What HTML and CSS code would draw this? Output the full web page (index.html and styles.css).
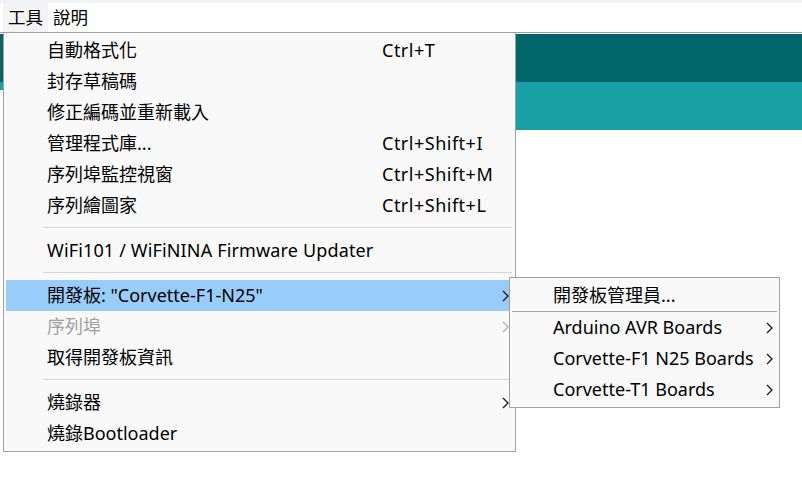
FILE: index.html
```html
<!DOCTYPE html>
<html lang="zh-Hant">
<head>
<meta charset="utf-8">
<title>Arduino IDE - 工具</title>
<link rel="stylesheet" href="styles.css">
</head>
<body>
<div class="app">
  <div class="top-strip"></div>
  <nav class="menubar">
    <span class="mb-item is-open">工具</span>
    <span class="mb-item">說明</span>
  </nav>
  <div class="toolbar"></div>
  <div class="tabbar">
    <div class="tab-active"></div>
  </div>
  <div class="editor"></div>
</div>

<div class="menu main-menu">
  <div class="row"><span class="label">自動格式化</span><span class="shortcut">Ctrl+T</span></div>
  <div class="row"><span class="label">封存草稿碼</span></div>
  <div class="row"><span class="label">修正編碼並重新載入</span></div>
  <div class="row"><span class="label">管理程式庫...</span><span class="shortcut">Ctrl+Shift+I</span></div>
  <div class="row"><span class="label">序列埠監控視窗</span><span class="shortcut">Ctrl+Shift+M</span></div>
  <div class="row"><span class="label">序列繪圖家</span><span class="shortcut">Ctrl+Shift+L</span></div>
  <div class="sep"></div>
  <div class="row"><span class="label latin">WiFi101 / WiFiNINA Firmware Updater</span></div>
  <div class="sep"></div>
  <div class="row is-hover"><span class="label">開發板: "Corvette-F1-N25"</span>
    <svg class="arrow" width="7" height="12" viewBox="0 0 7 12"><path d="M1 1 L6 6 L1 11" fill="none" stroke="currentColor" stroke-width="1.3"/></svg></div>
  <div class="row is-disabled"><span class="label">序列埠</span>
    <svg class="arrow" width="7" height="12" viewBox="0 0 7 12"><path d="M1 1 L6 6 L1 11" fill="none" stroke="currentColor" stroke-width="1.3"/></svg></div>
  <div class="row"><span class="label">取得開發板資訊</span></div>
  <div class="sep"></div>
  <div class="row"><span class="label">燒錄器</span>
    <svg class="arrow" width="7" height="12" viewBox="0 0 7 12"><path d="M1 1 L6 6 L1 11" fill="none" stroke="currentColor" stroke-width="1.3"/></svg></div>
  <div class="row"><span class="label">燒錄Bootloader</span></div>
</div>

<div class="menu sub-menu">
  <div class="row"><span class="label">開發板管理員...</span></div>
  <div class="sub-sep"></div>
  <div class="row"><span class="label">Arduino AVR Boards</span>
    <svg class="arrow" width="7" height="12" viewBox="0 0 7 12"><path d="M1 1 L6 6 L1 11" fill="none" stroke="currentColor" stroke-width="1.3"/></svg></div>
  <div class="row"><span class="label">Corvette-F1 N25 Boards</span>
    <svg class="arrow" width="7" height="12" viewBox="0 0 7 12"><path d="M1 1 L6 6 L1 11" fill="none" stroke="currentColor" stroke-width="1.3"/></svg></div>
  <div class="row"><span class="label">Corvette-T1 Boards</span>
    <svg class="arrow" width="7" height="12" viewBox="0 0 7 12"><path d="M1 1 L6 6 L1 11" fill="none" stroke="currentColor" stroke-width="1.3"/></svg></div>
</div>
</body>
</html>
```

FILE: styles.css
```css
* { box-sizing: border-box; }

html, body {
  margin: 0;
  padding: 0;
  background: #ffffff;
}

body {
  width: 802px;
  height: 480px;
  overflow: hidden;
  position: relative;
  font-family: "Noto Sans", "Noto Sans CJK TC", sans-serif;
  font-size: 18px;
  color: #000000;
}

.app {
  display: flex;
  flex-direction: column;
  height: 480px;
}

.top-strip {
  height: 3px;
  background: #eff2f6;
}

.menubar {
  height: 30px;
  display: flex;
  align-items: stretch;
  background: #ffffff;
  border-bottom: 1px solid #a0a0a0;
  padding-left: 3px;
}

.mb-item {
  padding: 0 5px;
  line-height: 29px;
  font-size: 17.5px;
}

.mb-item.is-open {
  background: #f4f4f4;
}

.toolbar {
  margin-top: 1px;
  height: 48px;
  background: #02666b;
}

.tabbar {
  height: 48px;
  background: #17a1a5;
  display: flex;
  align-items: flex-end;
}

.tab-active {
  width: 200px;
  height: 40px;
  background: #ffffff;
}

.editor {
  flex: 1;
  background: #ffffff;
}

.menu {
  position: absolute;
  background: #f9f9f9;
  border: 1px solid #a0a0a0;
  padding: 2px;
  display: flex;
  flex-direction: column;
}

.main-menu {
  left: 3px;
  top: 32px;
  width: 513px;
  height: 420px;
}

.sub-menu {
  left: 509px;
  top: 277px;
  width: 271px;
  height: 131px;
}

.row {
  height: 31px;
  line-height: 31px;
  display: flex;
  align-items: center;
  padding-left: 41px;
  padding-right: 4px;
  white-space: nowrap;
}

.main-menu .label {
  flex: 0 0 335px;
}

.label.latin {
  letter-spacing: 0.15px;
}

.sub-menu .label {
  flex: 1;
}

.shortcut {
  flex: 1;
  letter-spacing: 0.5px;
}

.arrow {
  margin-left: auto;
  flex: 0 0 7px;
  color: #1a1a1a;
}

.row.is-hover {
  background: #99cdf9;
}

.row.is-disabled {
  color: #a0a0a0;
}

.row.is-disabled .arrow {
  color: #b0b0b0;
}

.sep {
  height: 1px;
  margin: 6px 1px 7px 37px;
  background: #d6d6d6;
  flex: 0 0 1px;
}

.sub-sep {
  height: 1px;
  flex: 0 0 1px;
  background: #a8a8a8;
}
```
